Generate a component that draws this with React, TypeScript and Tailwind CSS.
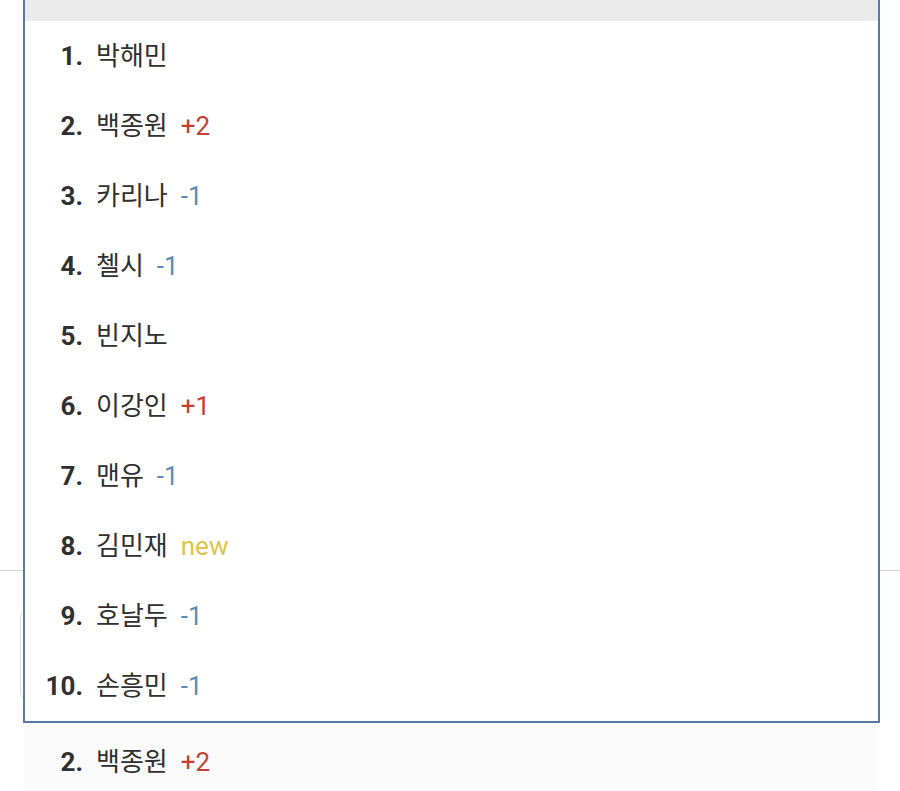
import React from "react";

type Item = { rank: number; name: string; delta?: string; kind?: "up" | "down" | "new" };

const items: Item[] = [
  { rank: 1, name: "박해민" },
  { rank: 2, name: "백종원", delta: "+2", kind: "up" },
  { rank: 3, name: "카리나", delta: "-1", kind: "down" },
  { rank: 4, name: "첼시", delta: "-1", kind: "down" },
  { rank: 5, name: "빈지노" },
  { rank: 6, name: "이강인", delta: "+1", kind: "up" },
  { rank: 7, name: "맨유", delta: "-1", kind: "down" },
  { rank: 8, name: "김민재", delta: "new", kind: "new" },
  { rank: 9, name: "호날두", delta: "-1", kind: "down" },
  { rank: 10, name: "손흥민", delta: "-1", kind: "down" },
];

function Delta({ item }: { item: Item }) {
  if (!item.delta) return null;
  const cls =
    item.kind === "up"
      ? "text-[#c5402f]"
      : item.kind === "down"
      ? "text-[#5b8cb6]"
      : "text-[#dcc548]";
  return <span className={`ml-[13px] ${cls}`}>{item.delta}</span>;
}

function Row({ item, numWidth }: { item: Item; numWidth: string }) {
  return (
    <div className="flex h-[70px] items-center text-[26px] text-[#303030]">
      <span className={`${numWidth} text-right font-bold`}>{item.rank}.</span>
      <span className="ml-[13px]">{item.name}</span>
      <Delta item={item} />
    </div>
  );
}

export default function App() {
  return (
    <div
      className="relative h-[791px] w-[900px] overflow-hidden bg-white"
      style={{ fontFamily: "Roboto, 'Noto Sans CJK KR', sans-serif" }}
    >
      {/* background page */}
      <div className="h-[570px]" />
      <div className="h-px bg-[#d6d6d6]" />
      <div className="mx-5 mt-[35px] h-[98px] rounded-xl border border-[#dedede] bg-white" />
      <div className="mx-6 mt-[23px] h-[70px] bg-[#fafafa]">
        <Row item={items[1]} numWidth="w-[59px]" />
      </div>

      {/* dropdown overlay */}
      <div className="absolute left-[23px] top-[-50px] w-[857px] border-2 border-[#5a79a8] bg-white">
        <div className="h-[69px] bg-[#ebebeb]" />
        {items.map((it) => (
          <Row key={it.rank} item={it} numWidth="w-[58px]" />
        ))}
      </div>
    </div>
  );
}
